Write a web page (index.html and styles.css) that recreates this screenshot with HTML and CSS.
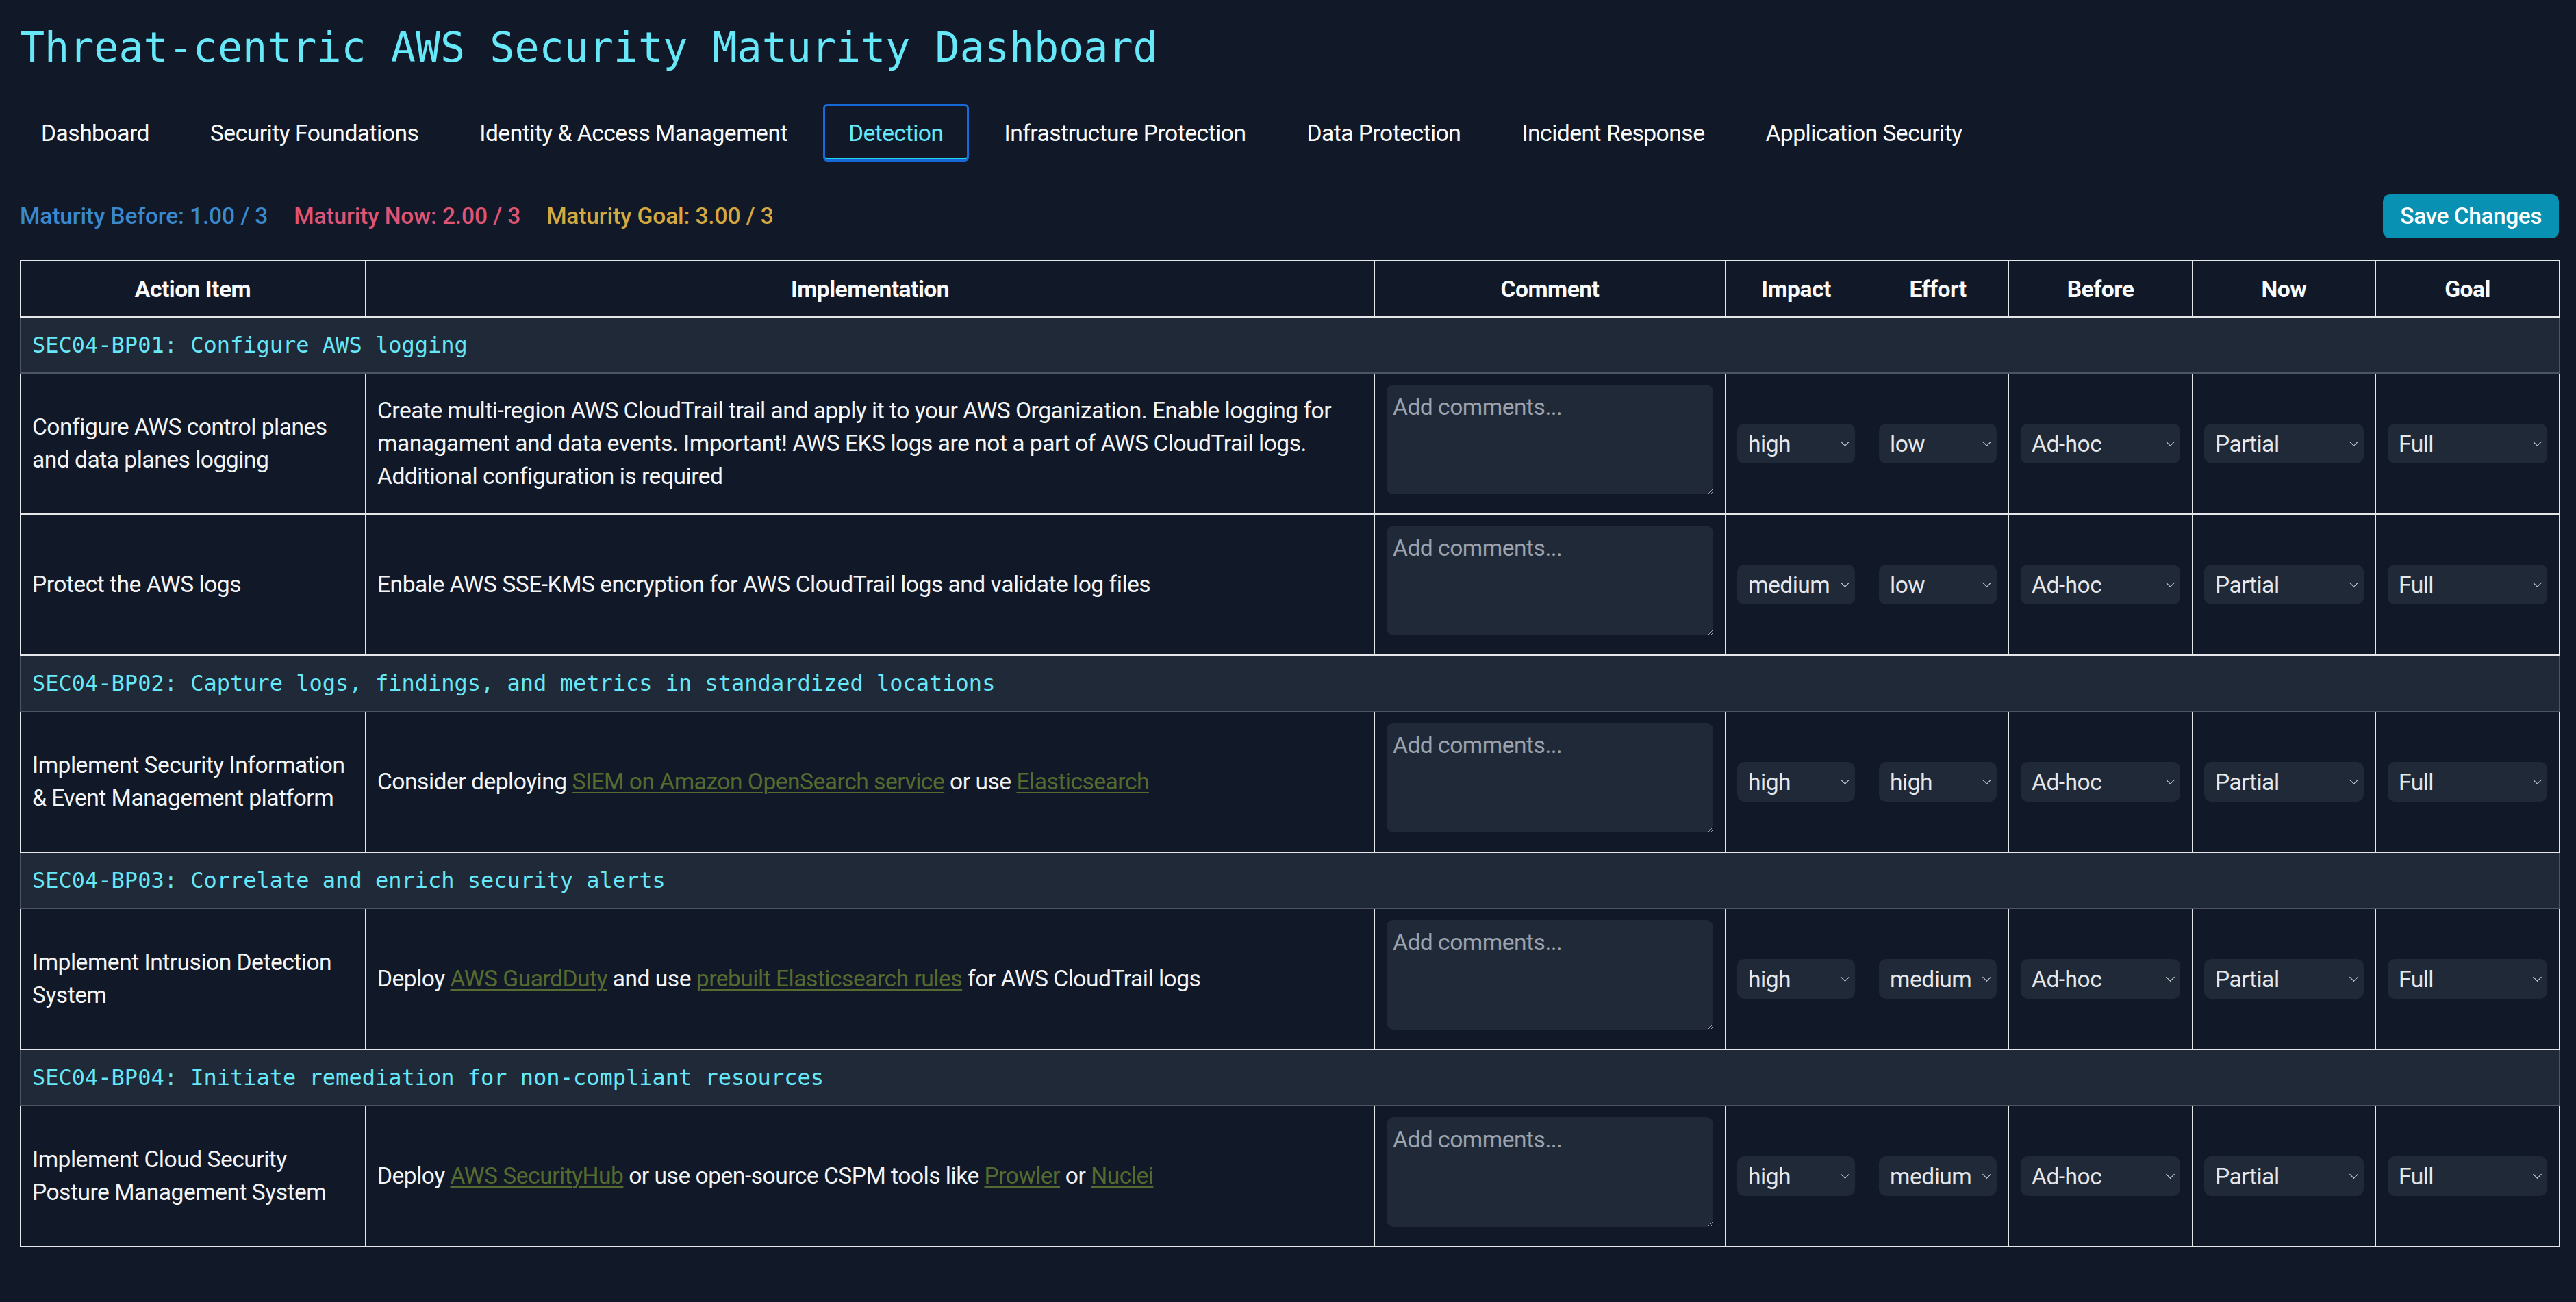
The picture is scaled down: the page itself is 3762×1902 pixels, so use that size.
FILE: index.html
```html
<!DOCTYPE html>
<html lang="en">
<head>
<meta charset="utf-8">
<title>Threat-centric AWS Security Maturity Dashboard</title>
<link rel="stylesheet" href="styles.css">
</head>
<body>
<div class="page">
  <h1 class="title">Threat-centric AWS Security Maturity Dashboard</h1>

  <nav class="tabs">
    <span class="tab">Dashboard</span>
    <span class="tab">Security Foundations</span>
    <span class="tab">Identity &amp; Access Management</span>
    <span class="tab active">Detection</span>
    <span class="tab">Infrastructure Protection</span>
    <span class="tab">Data Protection</span>
    <span class="tab">Incident Response</span>
    <span class="tab">Application Security</span>
  </nav>

  <div class="stats">
    <div class="scores">
      <span class="score before">Maturity Before: 1.00 / 3</span>
      <span class="score now">Maturity Now: 2.00 / 3</span>
      <span class="score goal">Maturity Goal: 3.00 / 3</span>
    </div>
    <button class="save">Save Changes</button>
  </div>

  <table class="grid">
    <colgroup>
      <col class="c-action"><col class="c-impl"><col class="c-comment"><col class="c-small"><col class="c-small"><col class="c-level"><col class="c-level"><col class="c-level">
    </colgroup>
    <thead>
      <tr>
        <th>Action Item</th><th>Implementation</th><th>Comment</th><th>Impact</th><th>Effort</th><th>Before</th><th>Now</th><th>Goal</th>
      </tr>
    </thead>
    <tbody>
      <tr class="section"><td colspan="8">SEC04-BP01: Configure AWS logging</td></tr>
      <tr class="item">
        <td>Configure AWS control planes and data planes logging</td>
        <td>Create multi-region AWS CloudTrail trail and apply it to your AWS Organization. Enable logging for managament and data events. Important! AWS EKS logs are not a part of AWS CloudTrail logs. Additional configuration is required</td>
        <td><textarea placeholder="Add comments..."></textarea></td>
        <td><span class="sel"><select><option>high</option><option>medium</option><option>low</option></select></span></td>
        <td><span class="sel"><select><option>low</option><option>medium</option><option>high</option></select></span></td>
        <td><span class="sel"><select><option>Ad-hoc</option><option>Partial</option><option>Full</option></select></span></td>
        <td><span class="sel"><select><option>Partial</option><option>Ad-hoc</option><option>Full</option></select></span></td>
        <td><span class="sel"><select><option>Full</option><option>Ad-hoc</option><option>Partial</option></select></span></td>
      </tr>
      <tr class="item">
        <td>Protect the AWS logs</td>
        <td>Enbale AWS SSE-KMS encryption for AWS CloudTrail logs and validate log files</td>
        <td><textarea placeholder="Add comments..."></textarea></td>
        <td><span class="sel"><select><option>medium</option><option>high</option><option>low</option></select></span></td>
        <td><span class="sel"><select><option>low</option><option>medium</option><option>high</option></select></span></td>
        <td><span class="sel"><select><option>Ad-hoc</option><option>Partial</option><option>Full</option></select></span></td>
        <td><span class="sel"><select><option>Partial</option><option>Ad-hoc</option><option>Full</option></select></span></td>
        <td><span class="sel"><select><option>Full</option><option>Ad-hoc</option><option>Partial</option></select></span></td>
      </tr>
      <tr class="section"><td colspan="8">SEC04-BP02: Capture logs, findings, and metrics in standardized locations</td></tr>
      <tr class="item">
        <td>Implement Security Information &amp; Event Management platform</td>
        <td>Consider deploying <a href="#">SIEM on Amazon OpenSearch service</a> or use <a href="#">Elasticsearch</a></td>
        <td><textarea placeholder="Add comments..."></textarea></td>
        <td><span class="sel"><select><option>high</option><option>medium</option><option>low</option></select></span></td>
        <td><span class="sel"><select><option>high</option><option>medium</option><option>low</option></select></span></td>
        <td><span class="sel"><select><option>Ad-hoc</option><option>Partial</option><option>Full</option></select></span></td>
        <td><span class="sel"><select><option>Partial</option><option>Ad-hoc</option><option>Full</option></select></span></td>
        <td><span class="sel"><select><option>Full</option><option>Ad-hoc</option><option>Partial</option></select></span></td>
      </tr>
      <tr class="section"><td colspan="8">SEC04-BP03: Correlate and enrich security alerts</td></tr>
      <tr class="item">
        <td>Implement Intrusion Detection System</td>
        <td>Deploy <a href="#">AWS GuardDuty</a> and use <a href="#">prebuilt Elasticsearch rules</a> for AWS CloudTrail logs</td>
        <td><textarea placeholder="Add comments..."></textarea></td>
        <td><span class="sel"><select><option>high</option><option>medium</option><option>low</option></select></span></td>
        <td><span class="sel"><select><option>medium</option><option>high</option><option>low</option></select></span></td>
        <td><span class="sel"><select><option>Ad-hoc</option><option>Partial</option><option>Full</option></select></span></td>
        <td><span class="sel"><select><option>Partial</option><option>Ad-hoc</option><option>Full</option></select></span></td>
        <td><span class="sel"><select><option>Full</option><option>Ad-hoc</option><option>Partial</option></select></span></td>
      </tr>
      <tr class="section"><td colspan="8">SEC04-BP04: Initiate remediation for non-compliant resources</td></tr>
      <tr class="item">
        <td>Implement Cloud Security Posture Management System</td>
        <td>Deploy <a href="#">AWS SecurityHub</a> or use open-source CSPM tools like <a href="#">Prowler</a> or <a href="#">Nuclei</a></td>
        <td><textarea placeholder="Add comments..."></textarea></td>
        <td><span class="sel"><select><option>high</option><option>medium</option><option>low</option></select></span></td>
        <td><span class="sel"><select><option>medium</option><option>high</option><option>low</option></select></span></td>
        <td><span class="sel"><select><option>Ad-hoc</option><option>Partial</option><option>Full</option></select></span></td>
        <td><span class="sel"><select><option>Partial</option><option>Ad-hoc</option><option>Full</option></select></span></td>
        <td><span class="sel"><select><option>Full</option><option>Ad-hoc</option><option>Partial</option></select></span></td>
      </tr>
    </tbody>
  </table>
</div>
</body>
</html>
```
FILE: styles.css
```css
* { box-sizing: border-box; }

html, body {
  margin: 0;
  background: #111827;
}

body {
  font-family: Roboto, "Liberation Sans", Arial, sans-serif;
  font-size: 33.6px;
  line-height: 48px;
  letter-spacing: -0.5px;
  color: #f3f4f6;
}

.page {
  padding: 33px 25px 40px 29px;
}

.title {
  margin: 0;
  font-family: "DejaVu Sans Mono", "Liberation Mono", monospace;
  font-size: 60px;
  line-height: 72px;
  font-weight: 400;
  letter-spacing: 0;
  color: #67e8f9;
}

.tabs {
  display: flex;
  gap: 21px;
  margin: 50px 0 0 -3px;
}

.tab {
  padding: 16px 34px 12px;
  border-bottom: 2px solid transparent;
  color: #f9fafb;
  white-space: nowrap;
}

.tab.active {
  color: #67e8f9;
  border-bottom-color: #22d3ee;
  border-radius: 3px;
  outline: 3px solid #1669d6;
}

.stats {
  display: flex;
  align-items: center;
  justify-content: space-between;
  margin-top: 51px;
}

.scores {
  display: flex;
  gap: 38px;
  font-weight: 500;
  letter-spacing: -0.15px;
}

.before { color: #3a89cd; }
.now { color: #df5474; }
.goal { color: #d5a942; }

.save {
  font-family: inherit;
  font-size: 33.6px;
  line-height: 48px;
  letter-spacing: -0.5px;
  font-weight: 500;
  color: #ffffff;
  background: #0891b2;
  border: none;
  border-radius: 10px;
  padding: 8px 25px;
}

.grid {
  margin-top: 32px;
  width: 3708px;
  table-layout: fixed;
  border-collapse: collapse;
}

.c-action { width: 504px; }
.c-impl { width: 1474px; }
.c-comment { width: 512px; }
.c-small { width: 207px; }
.c-level { width: 268px; }

.grid th {
  padding: 17px 17px 15px;
  font-weight: 700;
  text-align: center;
  color: #f9fafb;
  border-top: 2px solid #e5e7eb;
  border-bottom: 2px solid #e5e7eb;
  border-left: 1px solid #e5e7eb;
  border-right: 1px solid #e5e7eb;
}

.section td {
  padding: 16px 17px;
  background: #1f2937;
  font-family: "DejaVu Sans Mono", "Liberation Mono", monospace;
  font-size: 32px;
  letter-spacing: 0;
  color: #67e8f9;
  border-left: 1px solid #4b5563;
  border-right: 1px solid #4b5563;
  border-bottom: 2px solid #4b5563;
}

.item td {
  padding: 16px 17px;
  vertical-align: middle;
  border-left: 1px solid #e5e7eb;
  border-right: 1px solid #e5e7eb;
  border-bottom: 2px solid #e5e7eb;
}

.item a {
  color: #556b2f;
  text-decoration: underline;
  text-underline-offset: 4px;
  text-decoration-thickness: 2px;
}

textarea {
  display: block;
  width: 100%;
  height: 160px;
  margin-bottom: 12px;
  padding: 9px 9px;
  font-family: inherit;
  font-size: 33.6px;
  line-height: 48px;
  letter-spacing: -0.5px;
  color: #f3f4f6;
  background: #1f2937;
  border: none;
  border-radius: 10px;
  resize: vertical;
}

textarea::placeholder {
  color: #9ca3af;
}

.sel {
  position: relative;
  display: block;
}

.sel select {
  display: block;
  width: 100%;
  height: 58px;
  padding: 0 30px 0 16px;
  font-family: inherit;
  font-size: 33.6px;
  letter-spacing: -0.5px;
  color: #e5e7eb;
  background: #1f2937;
  border: none;
  border-radius: 10px;
  -webkit-appearance: none;
  appearance: none;
}

.sel::after {
  content: "";
  position: absolute;
  right: 10px;
  top: 50%;
  width: 8px;
  height: 8px;
  margin-top: -7px;
  border-right: 1.5px solid #e5e7eb;
  border-bottom: 1.5px solid #e5e7eb;
  transform: rotate(45deg);
  pointer-events: none;
}
```
